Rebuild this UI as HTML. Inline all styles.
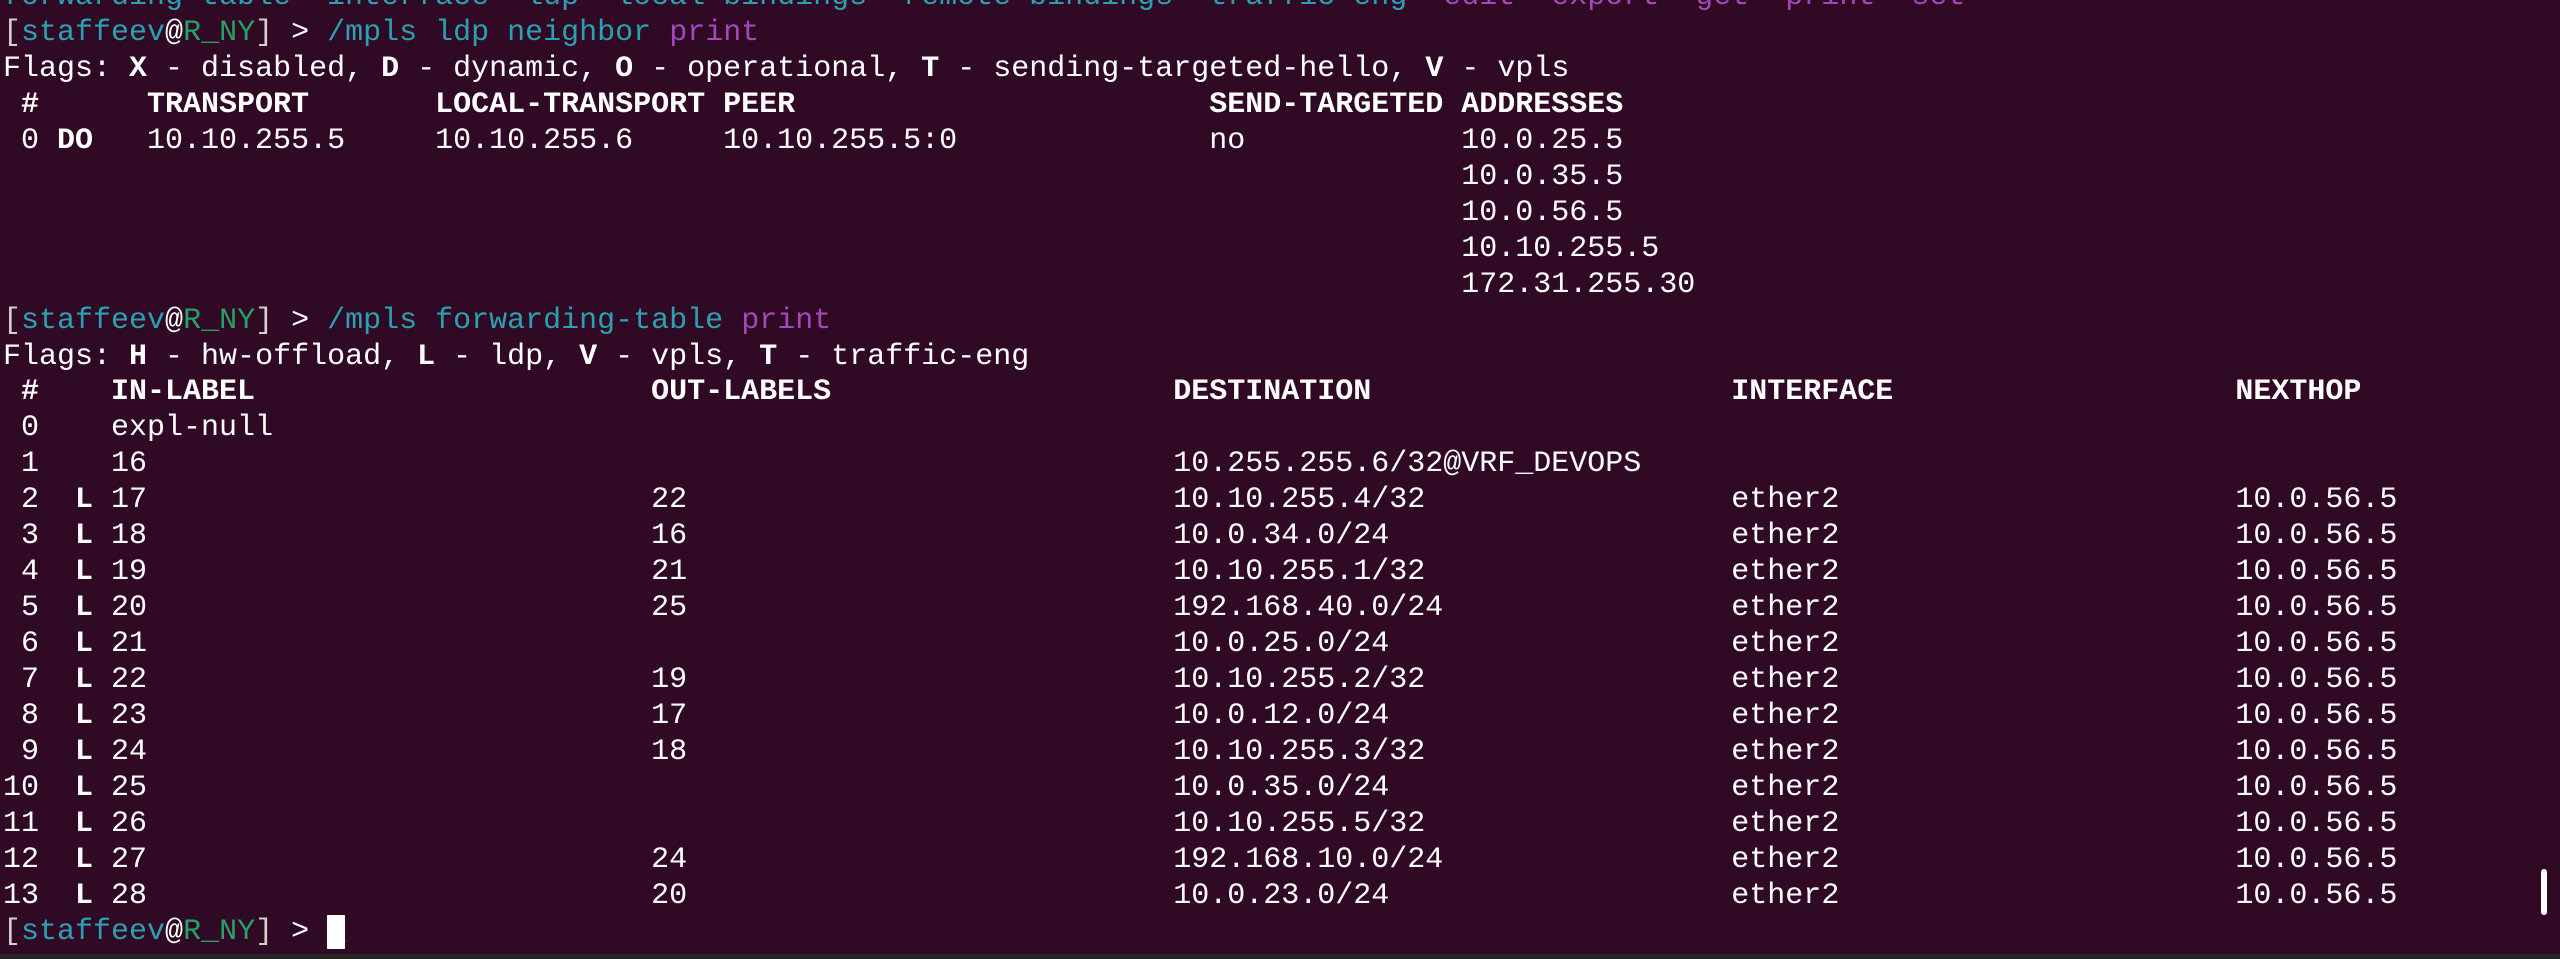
<!DOCTYPE html>
<html><head><meta charset="utf-8"><style>
html,body{margin:0;padding:0;background:#300a24;width:2560px;height:959px;overflow:hidden}
pre{position:absolute;left:3px;top:-20px;margin:0;font-family:"Liberation Mono","DejaVu Sans Mono",monospace;font-size:30px;line-height:35.95px;color:#ffffff}
.c{color:#2aa1b3}.g{color:#26a269}.m{color:#a347ba}.w{color:#d0cfcc}b{font-weight:bold}
.cur{background:#fff;color:#fff}
.bar{position:absolute;left:0;top:954px;width:2560px;height:5px;background:#242424}
.sb{position:absolute;left:2541px;top:869px;width:6px;height:46px;border-radius:3px;background:#fff}
</style></head><body>
<pre><span class="c">forwarding-table  interface  ldp  local-bindings  remote-bindings  traffic-eng</span>  <span class="m">edit  export  get  print  set</span>
<span class="w">[</span><span class="c">staffeev</span>@<span class="g">R_NY</span><span class="w">]</span> &gt; <span class="c">/mpls ldp neighbor</span> <span class="m">print</span>
Flags: <b>X</b> - disabled, <b>D</b> - dynamic, <b>O</b> - operational, <b>T</b> - sending-targeted-hello, <b>V</b> - vpls
<b> #      TRANSPORT       LOCAL-TRANSPORT PEER                       SEND-TARGETED ADDRESSES</b>
 0 <b>DO</b>   10.10.255.5     10.10.255.6     10.10.255.5:0              no            10.0.25.5
                                                                                 10.0.35.5
                                                                                 10.0.56.5
                                                                                 10.10.255.5
                                                                                 172.31.255.30
<span class="w">[</span><span class="c">staffeev</span>@<span class="g">R_NY</span><span class="w">]</span> &gt; <span class="c">/mpls forwarding-table</span> <span class="m">print</span>
Flags: <b>H</b> - hw-offload, <b>L</b> - ldp, <b>V</b> - vpls, <b>T</b> - traffic-eng
<b> #    IN-LABEL                      OUT-LABELS                   DESTINATION                    INTERFACE                   NEXTHOP</b>
 0    expl-null
 1    16                                                         10.255.255.6/32@VRF_DEVOPS
 2  <b>L</b> 17                            22                           10.10.255.4/32                 ether2                      10.0.56.5
 3  <b>L</b> 18                            16                           10.0.34.0/24                   ether2                      10.0.56.5
 4  <b>L</b> 19                            21                           10.10.255.1/32                 ether2                      10.0.56.5
 5  <b>L</b> 20                            25                           192.168.40.0/24                ether2                      10.0.56.5
 6  <b>L</b> 21                                                         10.0.25.0/24                   ether2                      10.0.56.5
 7  <b>L</b> 22                            19                           10.10.255.2/32                 ether2                      10.0.56.5
 8  <b>L</b> 23                            17                           10.0.12.0/24                   ether2                      10.0.56.5
 9  <b>L</b> 24                            18                           10.10.255.3/32                 ether2                      10.0.56.5
10  <b>L</b> 25                                                         10.0.35.0/24                   ether2                      10.0.56.5
11  <b>L</b> 26                                                         10.10.255.5/32                 ether2                      10.0.56.5
12  <b>L</b> 27                            24                           192.168.10.0/24                ether2                      10.0.56.5
13  <b>L</b> 28                            20                           10.0.23.0/24                   ether2                      10.0.56.5
<span class="w">[</span><span class="c">staffeev</span>@<span class="g">R_NY</span><span class="w">]</span> &gt; <span class="cur">_</span></pre>
<div class="sb"></div>
<div class="bar"></div>
</body></html>
